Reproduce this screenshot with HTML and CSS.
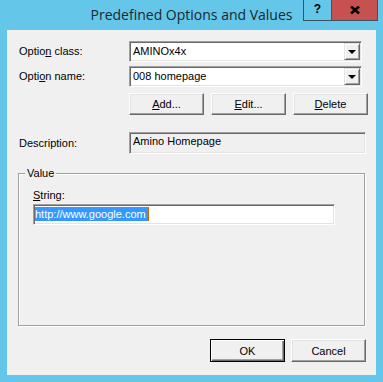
FILE: index.html
```html
<!DOCTYPE html>
<html lang="en">
<head>
  <meta charset="UTF-8">
  <title>Predefined Options and Values</title>
  <link rel="stylesheet" href="styles.css">
</head>
<body>
  <div class="window">
    <div class="titlebar">
      <span class="title">Predefined Options and Values</span>
      <div class="caption-btns">
        <span class="help">?</span>
        <span class="close">
          <svg width="10" height="8" viewBox="0 0 10 8"><path d="M1 0.5 L9 7.5 M9 0.5 L1 7.5" stroke="#000" stroke-width="2.6"/></svg>
        </span>
      </div>
    </div>

    <div class="client">
      <div class="row first">
        <label>Optio<u>n</u> class:</label>
        <div class="combo"><span class="combo-text">AMINOx4x</span><span class="drop"><i class="arrow"></i></span></div>
      </div>
      <div class="row second">
        <label>Opti<u>o</u>n name:</label>
        <div class="combo"><span class="combo-text">008 homepage</span><span class="drop"><i class="arrow"></i></span></div>
      </div>
      <div class="row buttons">
        <button class="btn"><u>A</u>dd...</button>
        <button class="btn"><u>E</u>dit...</button>
        <button class="btn"><u>D</u>elete</button>
      </div>
      <div class="row desc-row">
        <label>Description:</label>
        <div class="desc">Amino Homepage</div>
      </div>

      <div class="group">
        <span class="legend">Value</span>
        <div class="string-label"><u>S</u>tring:</div>
        <div class="edit"><span class="sel">http://www.google.com</span></div>
      </div>

      <div class="footer">
        <button class="btn default">OK</button>
        <button class="btn">Cancel</button>
      </div>
    </div>
  </div>
</body>
</html>
```

FILE: styles.css
```css
body {
  margin: 0;
}

.window {
  position: relative;
  width: 383px;
  height: 382px;
  background-color: #64c7ea;
}

.titlebar {
  height: 30px;
  display: flex;
  justify-content: center;
  align-items: center;
}

.title {
  font-family: "Open Sans", sans-serif;
  font-size: 14px;
  color: #1a2730;
  margin-top: -2px;
}

.caption-btns {
  position: absolute;
  top: 0;
  right: 5px;
  display: flex;
  height: 20px;
  border: 1px solid #3b5462;
  border-top: none;
}

.help {
  width: 27px;
  border-right: 1px solid #3b5462;
  text-align: center;
  font: bold 12px "Liberation Sans", sans-serif;
  line-height: 19px;
  color: #000;
}

.close {
  width: 45px;
  background-color: #c75050;
  display: flex;
  justify-content: center;
  align-items: center;
}

.client {
  margin: 0 7px;
  height: 345px;
  background-color: #f0f0f0;
  font-family: "Liberation Sans", Arial, sans-serif;
  font-size: 11px;
  line-height: 13px;
  color: #000;
}

.row {
  display: flex;
  align-items: center;
  padding-left: 12px;
}

.row label {
  width: 110px;
}

.row.first {
  padding-top: 11px;
}

.row.second {
  margin-top: 4px;
}

.row.buttons {
  margin-top: 6px;
  padding-left: 122px;
  gap: 7px;
}

.row.desc-row {
  margin-top: 17px;
}

/* sunken 3d frame */
.combo,
.desc,
.edit {
  box-sizing: border-box;
  border: 1px solid;
  border-color: #a0a0a0 #fff #fff #a0a0a0;
  box-shadow: inset 1px 1px 0 #696969, inset -1px -1px 0 #e3e3e3;
}

.combo {
  width: 233px;
  height: 21px;
  padding: 1px;
  background-color: #fff;
  display: flex;
  align-items: center;
}

.combo-text {
  padding-left: 2px;
}

.drop {
  margin-left: auto;
  width: 16px;
  height: 17px;
  box-sizing: border-box;
  background-color: #f0f0f0;
  border: 1px solid;
  border-color: #e3e3e3 #696969 #696969 #e3e3e3;
  box-shadow: inset 1px 1px 0 #fff, inset -1px -1px 0 #a0a0a0;
  display: flex;
  justify-content: center;
  align-items: center;
}

.arrow {
  width: 0;
  height: 0;
  border-left: 4px solid transparent;
  border-right: 4px solid transparent;
  border-top: 4px solid #000;
  margin-top: 1px;
}

.btn {
  width: 75px;
  height: 22px;
  padding: 0;
  box-sizing: border-box;
  background-color: #f0f0f0;
  font-family: "Liberation Sans", Arial, sans-serif;
  font-size: 11px;
  color: #000;
  border: 1px solid;
  border-color: #fff #696969 #696969 #fff;
  box-shadow: inset -1px -1px 0 #a0a0a0, inset 1px 1px 0 #e3e3e3;
}

.btn.default {
  border-color: #000;
  box-shadow: inset 1px 1px 0 #fff, inset -1px -1px 0 #696969, inset -2px -2px 0 #a0a0a0;
}

.desc {
  width: 237px;
  height: 22px;
  padding: 2px 0 0 3px;
  background-color: #f0f0f0;
}

.group {
  position: relative;
  box-sizing: border-box;
  width: 347px;
  height: 153px;
  margin: 19px 0 0 11px;
  padding: 15px 14px 0;
  border: 1px solid #a0a0a0;
  box-shadow: 1px 1px 0 #fff, inset 1px 1px 0 #fff;
}

.legend {
  position: absolute;
  top: -7px;
  left: 6px;
  padding: 0 2px;
  background-color: #f0f0f0;
}

.edit {
  width: 302px;
  height: 21px;
  margin-top: 2px;
  padding: 2px 0 0 1px;
  background-color: #fff;
}

.sel {
  display: inline-block;
  line-height: 14px;
  padding-right: 3px;
  background-color: #3399ff;
  color: #fff;
  box-shadow: inset -1px 0 0 #cc6600;
}

.footer {
  display: flex;
  justify-content: flex-end;
  gap: 6px;
  margin-top: 13px;
  padding-right: 10px;
}

.footer .btn {
  height: 23px;
}
```
